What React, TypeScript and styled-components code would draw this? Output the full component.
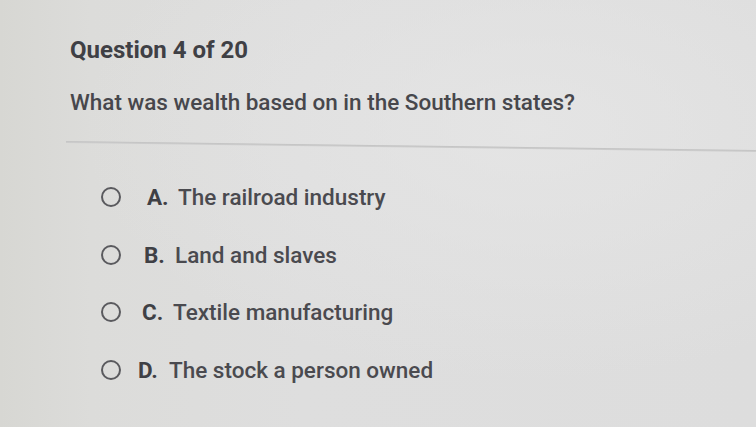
import React from "react";
import styled, { createGlobalStyle } from "styled-components";

const GlobalStyle = createGlobalStyle`
  html, body {
    margin: 0;
    padding: 0;
    width: 100%;
    height: 100%;
    overflow: hidden;
  }
  body {
    background: #dedede;
    font-family: Roboto, "Liberation Sans", Arial, sans-serif;
  }
`;

const Page = styled.div`
  width: 756px;
  height: 427px;
  box-sizing: border-box;
  padding: 36px 0 0 70px;
  background:
    radial-gradient(ellipse at 70% 30%, rgba(230, 230, 230, 0.8) 0%, rgba(230, 230, 230, 0) 60%),
    linear-gradient(90deg, #d7d7d3 0%, #dcdcda 12%, #dedede 40%, #dddddd 100%);
  color: #454549;
`;

const Header = styled.h1`
  margin: 0;
  font-size: 24px;
  font-weight: 700;
  line-height: 28px;
  color: #3f4045;
`;

const Prompt = styled.p`
  margin: 25px 0 0;
  font-size: 22.5px;
  font-weight: 500;
  line-height: 26px;
  color: #47474c;
`;

const Divider = styled.hr`
  margin: 26px 0 0 -4px;
  border: 0;
  height: 2px;
  background: linear-gradient(180deg, #c2c2c2, #cfcfcf);
  transform-origin: left center;
  transform: rotate(0.75deg);
`;

const Options = styled.ul`
  list-style: none;
  margin: 41px 0 0;
  padding: 0 0 0 31px;
  display: flex;
  flex-direction: column;
  gap: 31.5px;
`;

const Option = styled.li`
  display: flex;
  align-items: center;
  height: 26px;
  font-size: 22.5px;
  color: #4a4a4f;
`;

const Radio = styled.span`
  width: 16px;
  height: 16px;
  border: 2px solid #5a5a5e;
  border-radius: 50%;
  flex: none;
`;

const Letter = styled.span<{ $shift: number }>`
  margin-left: ${(p) => p.$shift}px;
  width: 31px;
  font-weight: 700;
  color: #3f4045;
`;

const Label = styled.span`
  font-weight: 500;
`;

const choices = [
  { letter: "A.", text: "The railroad industry", shift: 26 },
  { letter: "B.", text: "Land and slaves", shift: 23 },
  { letter: "C.", text: "Textile manufacturing", shift: 21 },
  { letter: "D.", text: "The stock a person owned", shift: 17 },
];

export default function App() {
  return (
    <>
      <GlobalStyle />
      <Page>
        <Header>Question 4 of 20</Header>
        <Prompt>What was wealth based on in the Southern states?</Prompt>
        <Divider />
        <Options>
          {choices.map((c) => (
            <Option key={c.letter}>
              <Radio />
              <Letter $shift={c.shift}>{c.letter}</Letter>
              <Label>{c.text}</Label>
            </Option>
          ))}
        </Options>
      </Page>
    </>
  );
}
